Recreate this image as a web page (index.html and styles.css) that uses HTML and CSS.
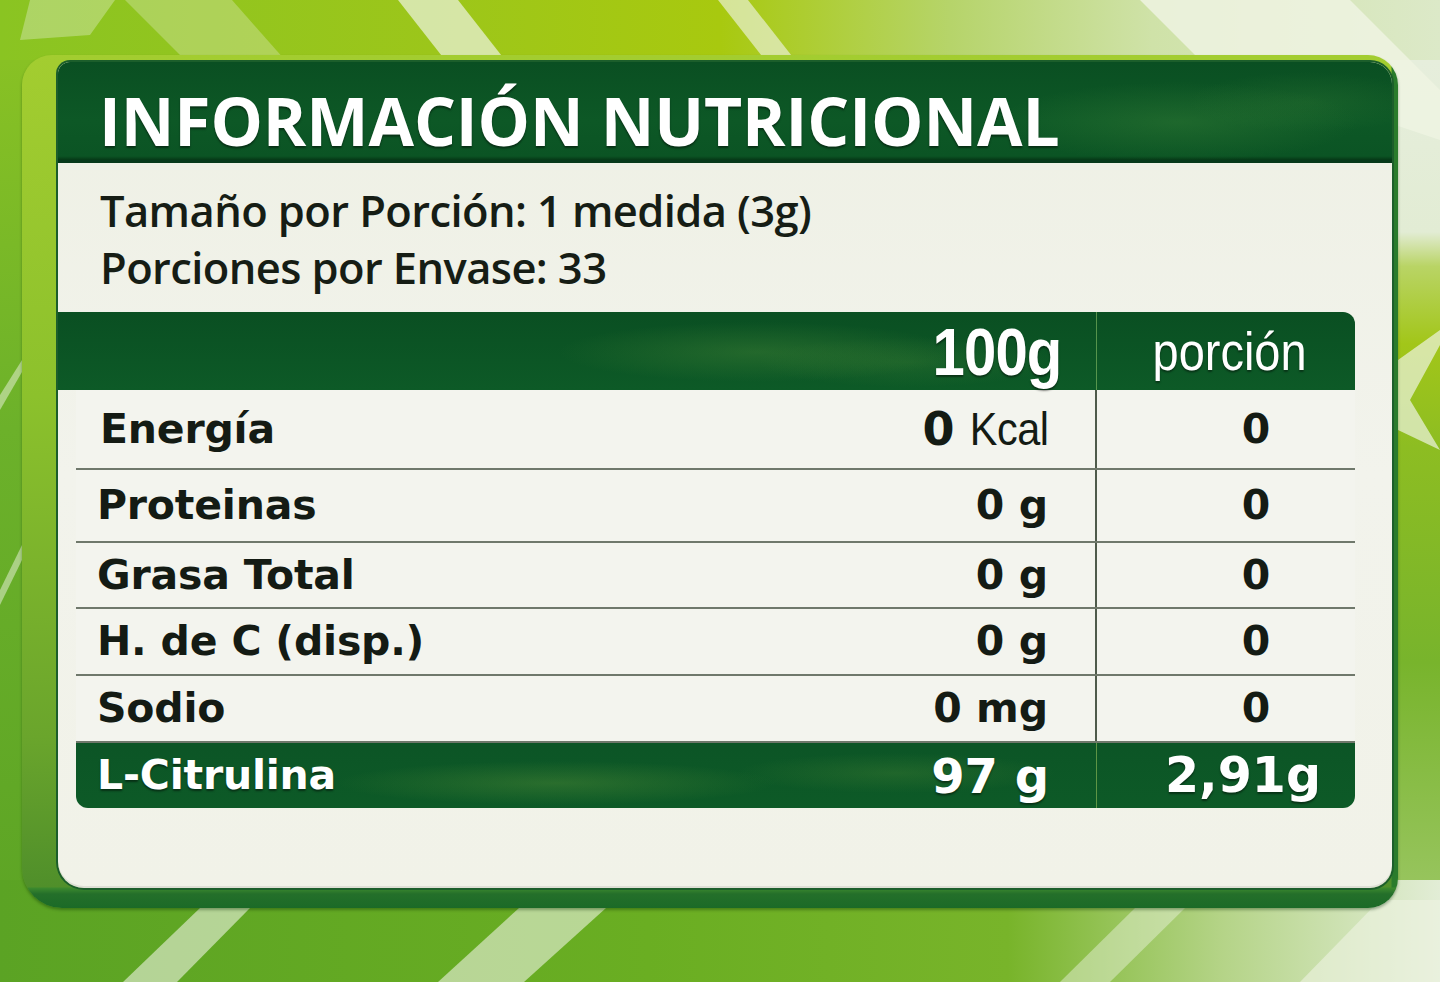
FILE: index.html
```html
<!DOCTYPE html>
<html lang="es">
<head>
<meta charset="utf-8">
<title>Información Nutricional</title>
<link rel="stylesheet" href="styles.css">
</head>
<body>
<div class="scene">
  <svg class="bg" viewBox="0 0 1440 982" preserveAspectRatio="none" aria-hidden="true">
    <defs>
      <linearGradient id="gTop" x1="0" y1="0" x2="1" y2="0">
        <stop offset="0" stop-color="#8ac422"/>
        <stop offset="0.3" stop-color="#9cc61a"/>
        <stop offset="0.5" stop-color="#a8c90f"/>
        <stop offset="0.66" stop-color="#b6d46a"/>
        <stop offset="0.8" stop-color="#cfe2a8"/>
        <stop offset="1" stop-color="#dce9c8"/>
      </linearGradient>
      <linearGradient id="gBot" x1="0" y1="0" x2="1" y2="0">
        <stop offset="0" stop-color="#5ba324"/>
        <stop offset="0.45" stop-color="#6aae22"/>
        <stop offset="0.7" stop-color="#78b42a"/>
        <stop offset="0.85" stop-color="#b5d488"/>
        <stop offset="1" stop-color="#e2edd6"/>
      </linearGradient>
      <linearGradient id="gLeft" x1="0" y1="0" x2="0" y2="1">
        <stop offset="0" stop-color="#88c124"/>
        <stop offset="0.4" stop-color="#6cb12a"/>
        <stop offset="1" stop-color="#5ba324"/>
      </linearGradient>
      <linearGradient id="gRight" x1="0" y1="0" x2="0" y2="1">
        <stop offset="0" stop-color="#e6eedc"/>
        <stop offset="0.2" stop-color="#e2ecd4"/>
        <stop offset="0.24" stop-color="#b9d465"/>
        <stop offset="0.33" stop-color="#a2c619"/>
        <stop offset="0.45" stop-color="#8dbd22"/>
        <stop offset="0.7" stop-color="#78b42c"/>
        <stop offset="1" stop-color="#9cc765"/>
      </linearGradient>
    </defs>
    <rect x="0" y="0" width="1440" height="982" fill="url(#gTop)"/>
    <rect x="0" y="60" width="700" height="922" fill="url(#gLeft)"/>
    <rect x="1390" y="60" width="50" height="860" fill="url(#gRight)"/>
    <rect x="0" y="880" width="1440" height="102" fill="url(#gBot)"/>
    <g fill="#eef3e2">
      <polygon points="30,0 115,0 90,35 20,40" opacity="0.35"/>
      <polygon points="125,0 232,0 285,60 185,60" opacity="0.3"/>
      <polygon points="398,0 458,0 505,60 445,60" opacity="0.7"/>
      <polygon points="718,0 748,0 795,60 765,60" opacity="0.65"/>
      <polygon points="1140,0 1350,0 1440,90 1440,140 1200,60" opacity="0.85"/>
      <polygon points="0,395 22,360 22,372 0,410" opacity="0.5"/>
      <polygon points="0,590 22,545 22,560 0,605" opacity="0.5"/>
      <polygon points="1398,360 1440,330 1440,345 1410,400 1440,450 1398,430" opacity="0.7"/>
      <polygon points="123,982 177,982 250,908 200,908" opacity="0.6"/>
      <polygon points="438,982 524,982 606,908 519,908" opacity="0.6"/>
      <polygon points="1060,982 1110,982 1185,908 1135,908" opacity="0.45"/>
      <polygon points="1300,982 1440,982 1440,900 1380,900" opacity="0.6"/>
    </g>
  </svg>

  <div class="frame">
    <div class="card">
      <header class="head">
        <h1 class="title">INFORMACIÓN NUTRICIONAL</h1>
      </header>

      <section class="serving">
        <p class="serving-line">Tamaño por Porción: 1 medida (3g)</p>
        <p class="serving-line">Porciones por Envase: 33</p>
      </section>

      <div class="table">
        <div class="thead">
          <div class="th-main"><span class="cond cond-big">100g</span></div>
          <div class="th-por"><span class="cond cond-por">porción</span></div>
        </div>

        <div class="row row-1">
          <div class="cell-main"><span class="lbl">Energía</span><span class="val"><span class="num">0</span><span class="cond cond-kcal">Kcal</span></span></div>
          <div class="cell-por">0</div>
        </div>
        <div class="row row-2">
          <div class="cell-main"><span class="lbl">Proteinas</span><span class="val">0 g</span></div>
          <div class="cell-por">0</div>
        </div>
        <div class="row row-3">
          <div class="cell-main"><span class="lbl">Grasa Total</span><span class="val">0 g</span></div>
          <div class="cell-por">0</div>
        </div>
        <div class="row row-4">
          <div class="cell-main"><span class="lbl">H. de C (disp.)</span><span class="val">0 g</span></div>
          <div class="cell-por">0</div>
        </div>
        <div class="row row-5">
          <div class="cell-main"><span class="lbl">Sodio</span><span class="val">0 mg</span></div>
          <div class="cell-por">0</div>
        </div>
        <div class="row row-6 row-hl">
          <div class="cell-main"><span class="lbl">L-Citrulina</span><span class="val val-hl">97 g</span></div>
          <div class="cell-por por-hl">2,91g</div>
        </div>
      </div>
    </div>
  </div>
</div>
</body>
</html>
```

FILE: styles.css
```css
* { box-sizing: border-box; }

html, body {
  margin: 0;
  padding: 0;
}

body {
  width: 1440px;
  height: 982px;
  overflow: hidden;
  background: #7cb82a;
  font-family: "DejaVu Sans", sans-serif;
}

.scene {
  position: relative;
  width: 1440px;
  height: 982px;
  overflow: hidden;
}

.bg {
  position: absolute;
  left: 0;
  top: 0;
  width: 1440px;
  height: 982px;
  z-index: 0;
}

.frame {
  position: relative;
  z-index: 1;
  margin: 55px 0 0 22px;
  width: 1376px;
  height: 853px;
  padding: 7px 6px 20px 36px;
  border-radius: 30px 30px 30px 40px;
  background:
    linear-gradient(to top, #1b6a27 0, #246f2a 14px, #3c8a2e 20px, rgba(60,138,46,0) 21px),
    linear-gradient(to left, #2a7b2c 0, #2a7b2c 6px, rgba(42,123,44,0) 7px),
    linear-gradient(180deg, #a3cd30 0%, #8cc12c 40%, #6aa52c 80%, #4c8c2a 100%);
  box-shadow: 0 2px 3px rgba(0,40,0,0.35);
}

.card {
  height: 100%;
  display: flex;
  flex-direction: column;
  background: linear-gradient(180deg, #eef0e4 0%, #f2f3ec 50%, #f1f2e8 100%);
  border-radius: 12px 22px 22px 26px;
  box-shadow: 0 0 0 2px #1c5e2b, inset 0 -2px 0 rgba(0,0,0,0.08);
  overflow: hidden;
}

.head {
  height: 101px;
  flex: 0 0 101px;
  padding: 25px 0 0 41px;
  background:
    radial-gradient(ellipse 180px 40px at 1120px 60px, rgba(70,140,60,0.3), rgba(70,140,60,0)),
    radial-gradient(ellipse 120px 30px at 1250px 40px, rgba(70,140,60,0.2), rgba(70,140,60,0)),
    linear-gradient(180deg, #0a4f22 0%, #0d5826 60%, #0b5424 96%, #053816 100%);
  border-bottom: 3px solid #06391a;
}

.title {
  margin: 0;
  font-family: "Open Sans", sans-serif;
  font-weight: 700;
  font-size: 66px;
  line-height: 66px;
  color: #ffffff;
  letter-spacing: -0.1px;
  text-shadow: 0 2px 2px rgba(0,0,0,0.45);
}

.serving {
  flex: 0 0 149px;
  height: 149px;
  padding: 19px 0 0 42px;
}

.serving-line {
  margin: 0;
  font-family: "Open Sans", sans-serif;
  font-weight: 600;
  font-size: 43.5px;
  line-height: 57px;
  color: #161d15;
  letter-spacing: -0.6px;
}

.table {
  margin-right: 37px;
}

.thead {
  height: 78px;
  display: grid;
  grid-template-columns: 1fr 258px;
  background:
    radial-gradient(ellipse 200px 30px at 700px 40px, rgba(90,150,60,0.3), rgba(90,150,60,0)),
    radial-gradient(ellipse 150px 25px at 850px 50px, rgba(90,150,60,0.2), rgba(90,150,60,0)),
    linear-gradient(180deg, #0a4f22 0%, #0d5a27 100%);
  border-radius: 0 12px 0 0;
  color: #ffffff;
}

.th-main {
  display: flex;
  align-items: center;
  justify-content: flex-end;
  padding-right: 35px;
  border-right: 1px solid rgba(150, 200, 110, 0.55);
}

.th-por {
  display: flex;
  align-items: center;
  justify-content: center;
}

.cond {
  display: inline-block;
  font-family: "Liberation Sans", Arial, sans-serif;
}

.cond-big {
  font-weight: 700;
  font-size: 66px;
  line-height: 1;
  transform: scaleX(0.88);
  transform-origin: right center;
  letter-spacing: -1px;
  text-shadow: 0 2px 2px rgba(0,0,0,0.45);
  margin-top: 2px;
}

.cond-por {
  font-weight: 400;
  font-size: 54px;
  line-height: 1;
  transform: scaleX(0.87);
  transform-origin: center center;
  text-shadow: 0 2px 2px rgba(0,0,0,0.4);
  margin-left: 8px;
}

.num {
  display: inline-block;
  font-size: 46px;
  margin-right: 6px;
}

.cond-kcal {
  font-weight: 400;
  font-size: 46px;
  transform: scaleX(0.9);
  transform-origin: right center;
  letter-spacing: -0.5px;
}

.row {
  margin-left: 18px;
  display: grid;
  grid-template-columns: 1fr 258px;
  background: #f3f4ee;
  border-bottom: 2px solid #6f786b;
  color: #141b14;
}

.row-1 { height: 80px; }
.row-2 { height: 73px; }
.row-3 { height: 66px; }
.row-4 { height: 67px; }
.row-5 { height: 67px; }
.row-6 { height: 65px; }

.cell-main {
  display: flex;
  align-items: center;
  justify-content: space-between;
  padding: 0 47px 0 21px;
  border-right: 2px solid #4e5a4b;
}

.lbl {
  font-weight: 700;
  font-size: 41px;
  line-height: 1;
  letter-spacing: -0.2px;
}

.row-1 .lbl { margin-left: 3px; }

.val {
  display: inline-flex;
  align-items: baseline;
  font-weight: 700;
  font-size: 41px;
  line-height: 1;
  white-space: nowrap;
}

.cell-por {
  display: flex;
  align-items: center;
  justify-content: center;
  padding-left: 60px;
  font-weight: 700;
  font-size: 41px;
  line-height: 1;
}

.row-hl {
  border-bottom: none;
  border-radius: 0 0 12px 12px;
  color: #ffffff;
  background:
    radial-gradient(ellipse 220px 22px at 480px 40px, rgba(110,160,60,0.3), rgba(110,160,60,0)),
    radial-gradient(ellipse 160px 20px at 820px 30px, rgba(110,160,60,0.2), rgba(110,160,60,0)),
    linear-gradient(180deg, #0c5526 0%, #0d5a27 100%);
}

.row-hl .cell-main {
  border-right: 1px solid rgba(150, 190, 90, 0.6);
  padding-right: 47px;
}

.row-hl .lbl,
.row-hl .val,
.row-hl .cell-por {
  text-shadow: 0 2px 2px rgba(0,0,0,0.45);
}

.val-hl {
  font-size: 48px;
}

.por-hl {
  font-size: 49px;
  justify-content: flex-end;
  padding-left: 0;
  padding-right: 34px;
}
```
